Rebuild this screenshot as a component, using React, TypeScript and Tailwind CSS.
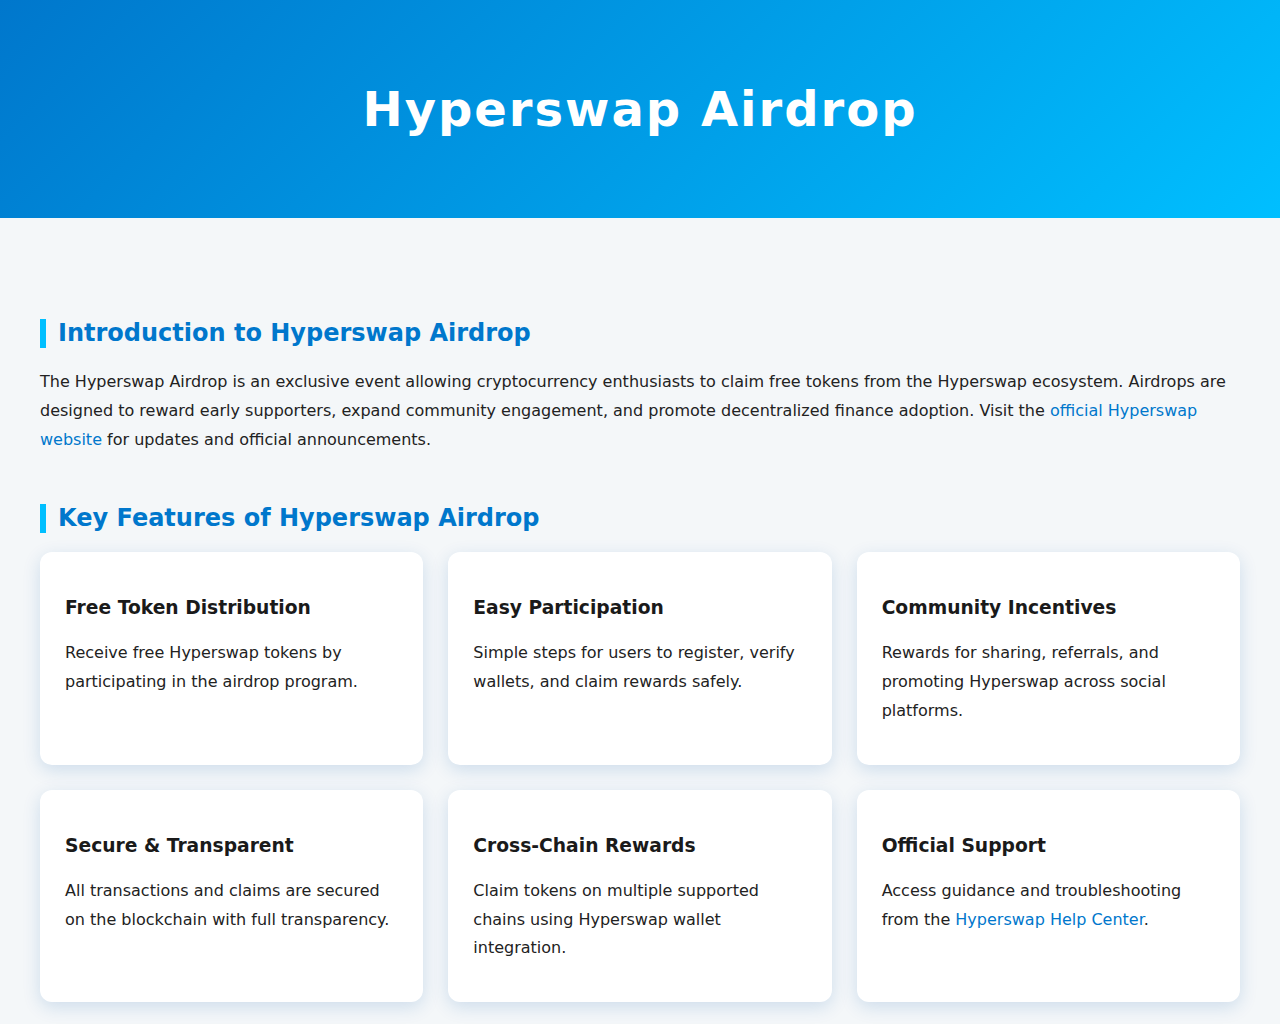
import React from "react";

const font = { fontFamily: '"DejaVu Sans", Verdana, sans-serif' };

type Card = { title: string; body: React.ReactNode };

const cards: Card[] = [
  { title: "Free Token Distribution", body: "Receive free Hyperswap tokens by participating in the airdrop program." },
  { title: "Easy Participation", body: "Simple steps for users to register, verify wallets, and claim rewards safely." },
  { title: "Community Incentives", body: "Rewards for sharing, referrals, and promoting Hyperswap across social platforms." },
  { title: "Secure & Transparent", body: "All transactions and claims are secured on the blockchain with full transparency." },
  { title: "Cross-Chain Rewards", body: "Claim tokens on multiple supported chains using Hyperswap wallet integration." },
  {
    title: "Official Support",
    body: (
      <>
        Access guidance and troubleshooting from the{" "}
        <a href="#" className="text-[#0077cc]">Hyperswap Help Center</a>.
      </>
    ),
  },
];

export default function App() {
  return (
    <div className="min-h-[1024px] bg-[#f4f7f9] text-[#222]" style={font}>
      <header className="h-[218px] flex items-center justify-center bg-[linear-gradient(135deg,#0077cc,#00bfff)]">
        <h1 className="text-white font-bold text-[48px] tracking-[2px] leading-none">Hyperswap Airdrop</h1>
      </header>
      <main className="px-[40px] pt-[101px] pb-[40px]">
        <section className="mb-[50px]">
          <h2 className="border-l-[6px] border-[#00bfff] pl-[12px] text-[24px] leading-[29px] font-bold text-[#0077cc] mb-[20px]">
            Introduction to Hyperswap Airdrop
          </h2>
          <p className="text-[16px] leading-[1.8]">
            The Hyperswap Airdrop is an exclusive event allowing cryptocurrency enthusiasts to claim free tokens from the Hyperswap ecosystem. Airdrops are designed to reward early supporters, expand community engagement, and promote decentralized finance adoption. Visit the{" "}
            <a href="#" className="text-[#0077cc]">official Hyperswap website</a> for updates and official announcements.
          </p>
        </section>
        <section>
          <h2 className="border-l-[6px] border-[#00bfff] pl-[12px] text-[24px] leading-[29px] font-bold text-[#0077cc] mb-[19px]">
            Key Features of Hyperswap Airdrop
          </h2>
          <div className="grid grid-cols-3 gap-x-[25px] gap-y-[25px]">
            {cards.map((c) => (
              <div
                key={c.title}
                className="bg-white rounded-[12px] p-[25px] shadow-[0_5px_18px_rgba(0,90,170,0.16)]"
              >
                <h3 className="text-[18.7px] font-bold text-[#1a1a1a] leading-[22px] mt-[20px] mb-[20px]">{c.title}</h3>
                <p className="text-[16px] leading-[1.8] text-[#222] mb-[14px]">{c.body}</p>
              </div>
            ))}
          </div>
        </section>
      </main>
    </div>
  );
}
